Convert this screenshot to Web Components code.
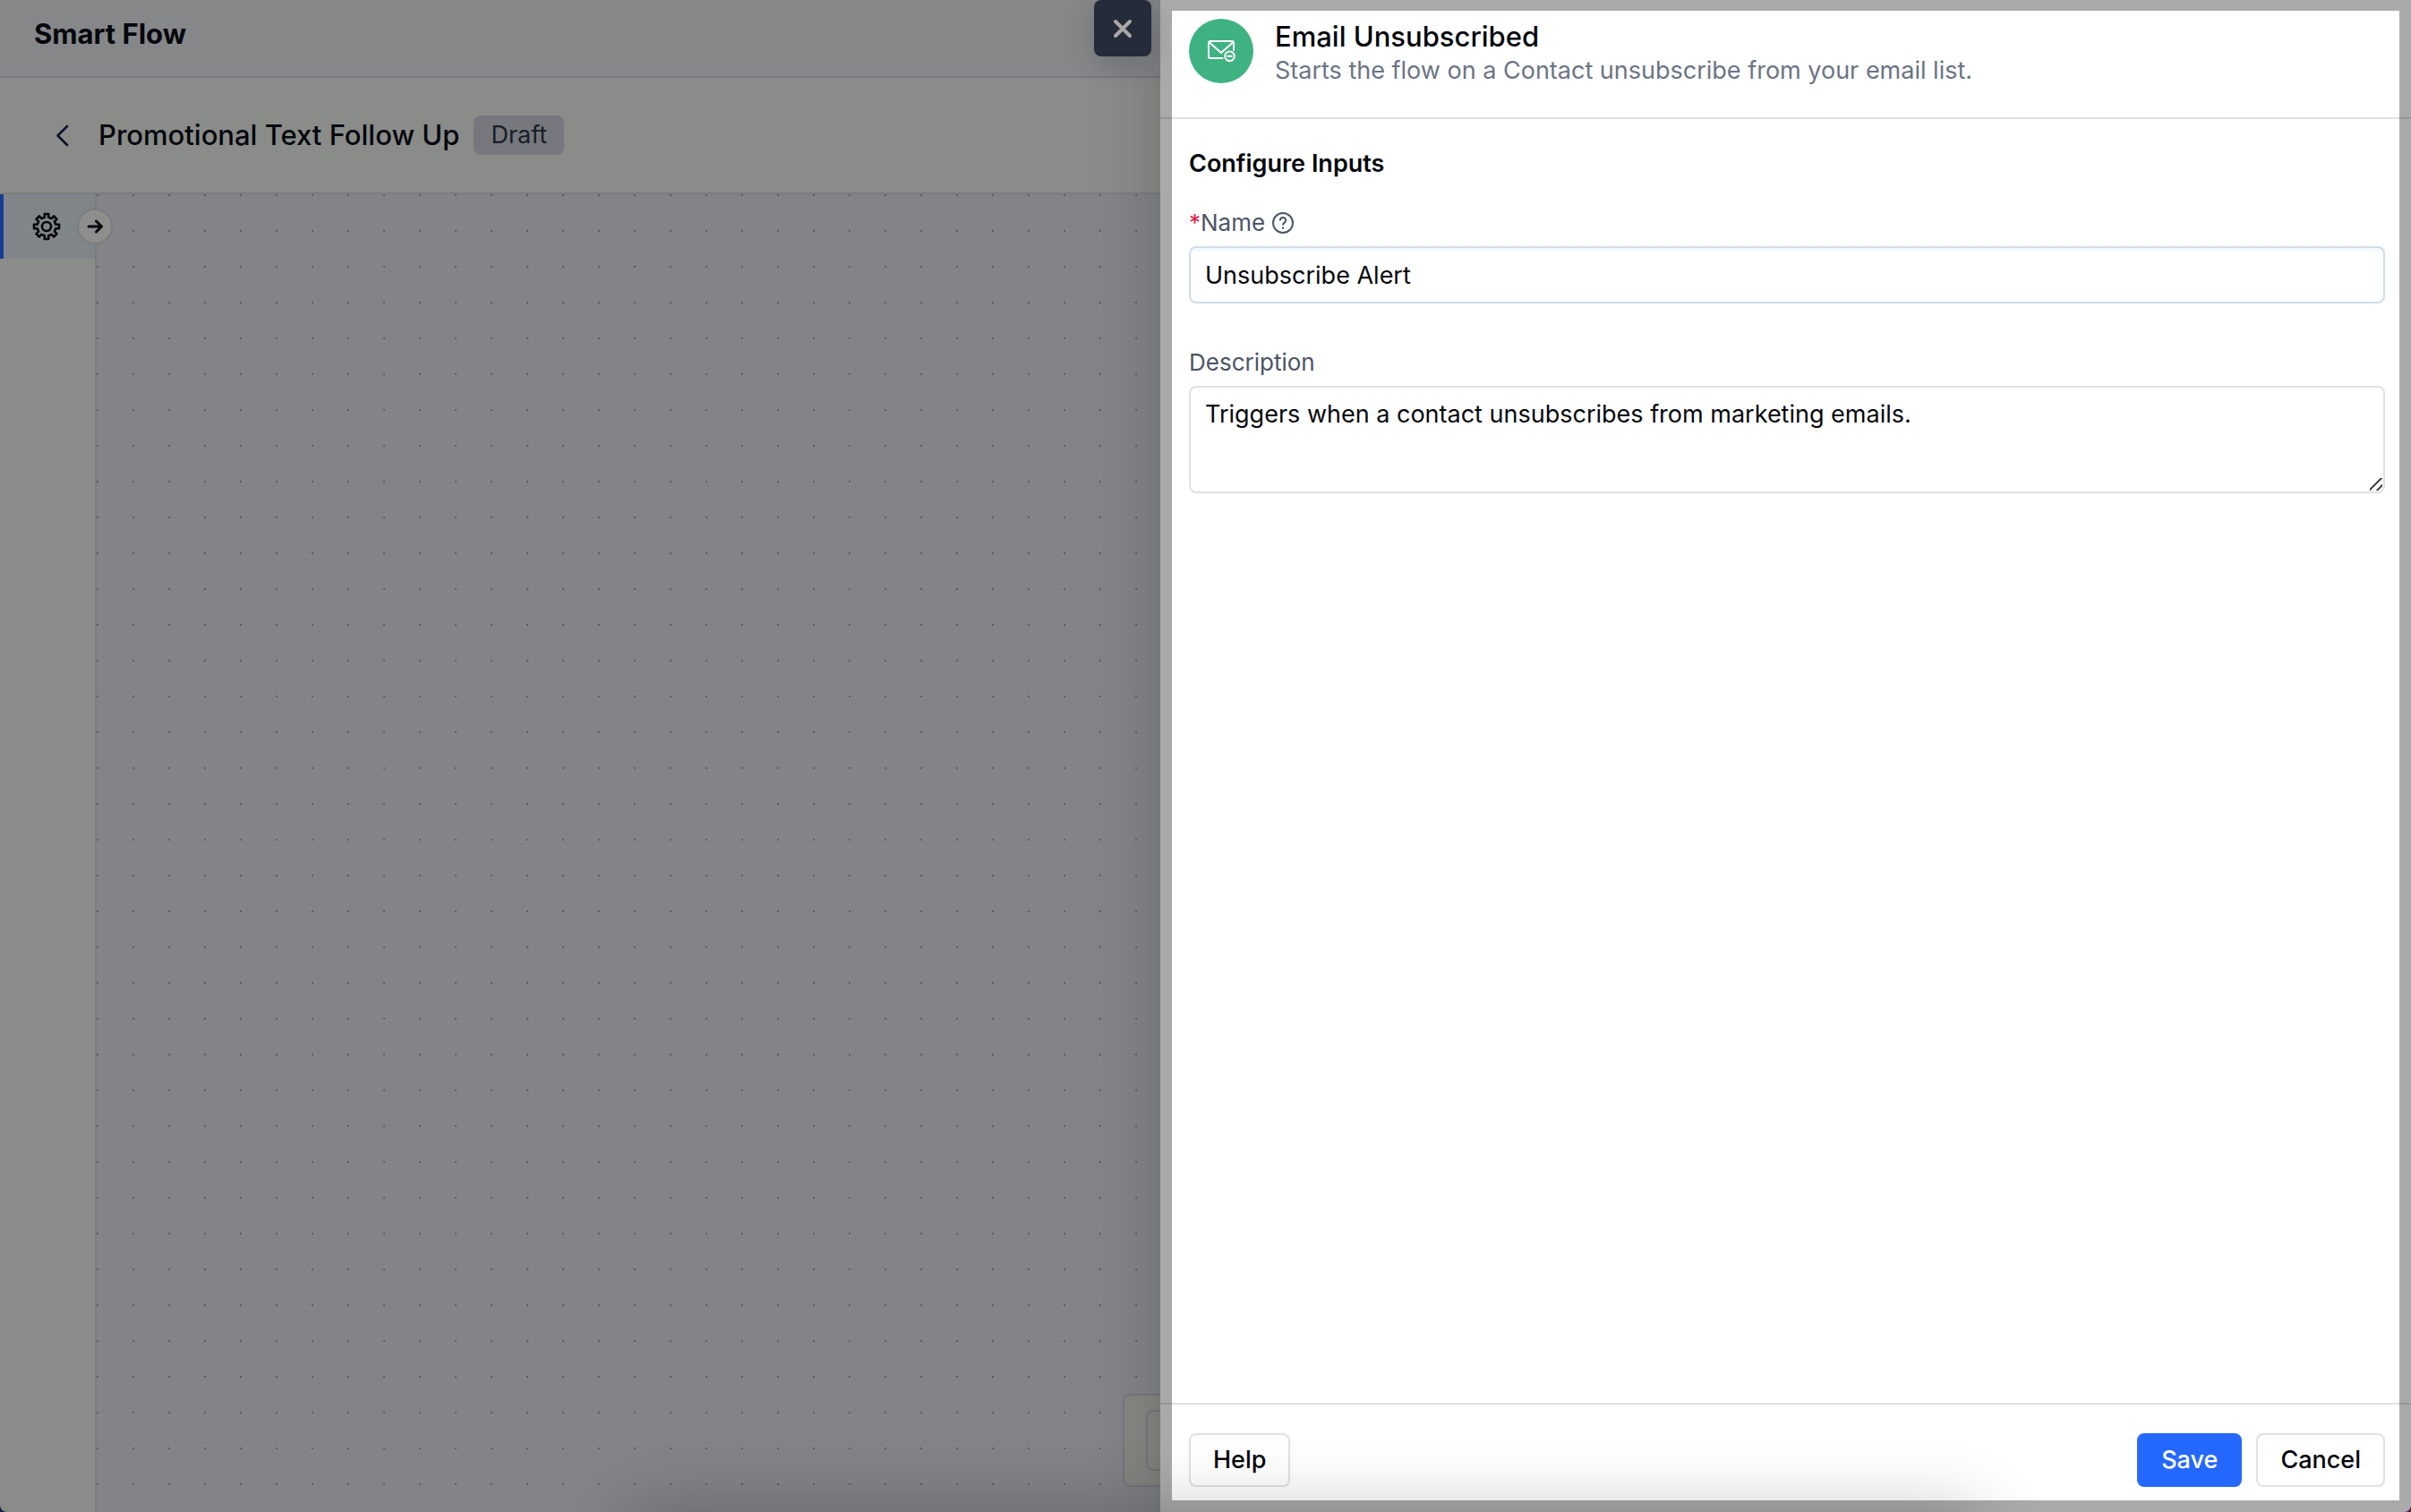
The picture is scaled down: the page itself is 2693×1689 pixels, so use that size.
<!DOCTYPE html>
<html lang="en">
<head>
<meta charset="utf-8">
<title>Smart Flow</title>
<style>
  html, body { height: 100%; }
  body {
    margin: 0;
    overflow: hidden;
    font-family: Inter, "Liberation Sans", sans-serif;
    color: #05070d;
    background: linear-gradient(90deg, #1b2244, #5a1c4a);
  }
</style>
</head>
<body>
<smart-flow-app></smart-flow-app>

<script>
class FlowHeader extends HTMLElement {
  constructor() {
    super();
    this.attachShadow({ mode: "open" });
  }

  connectedCallback() {
    this.shadowRoot.innerHTML = `
      <style>
        :host { display: block; }
        .product {
          box-sizing: border-box;
          height: 87px;
          padding: 18px 38px;
          background: #868789;
          border-bottom: 2px solid #7a7b81;
        }
        h1 { margin: 0; font-size: 31px; line-height: 40px; font-weight: 700; }
        .title-bar {
          display: flex;
          align-items: center;
          box-sizing: border-box;
          height: 130px;
          padding: 0 54px;
          background: #8a8c89;
          border-bottom: 2px solid #7b7c7e;
        }
        button { display: flex; padding: 0; border: 0; background: none; cursor: pointer; }
        h2 { margin: 0 16px 0 24px; font-size: 31px; line-height: 40px; font-weight: 500; }
        .badge {
          padding: 0 19px;
          border-radius: 8px;
          font-size: 27px;
          line-height: 44px;
          color: #171d28;
          background: #77787d;
        }
      </style>
      <div class="product"><h1>Smart Flow</h1></div>
      <div class="title-bar">
        <button type="button" aria-label="Back">
          <svg width="32" height="32" viewBox="0 0 32 32" fill="none" stroke="#0a1227" stroke-width="2.6" stroke-linecap="round" stroke-linejoin="round"><path d="M21 6 10.500 16.500 21 27"/></svg>
        </button>
        <h2><slot name="title"></slot></h2>
        <span class="badge"><slot name="status"></slot></span>
      </div>
    `;
  }
}

class FlowSidebar extends HTMLElement {
  constructor() {
    super();
    this.attachShadow({ mode: "open" });
  }

  connectedCallback() {
    this.shadowRoot.innerHTML = `
      <style>
        :host {
          display: block;
          position: relative;
          box-sizing: border-box;
          width: 108px;
          background: #8a8c89;
          border-right: 2px solid #7a7b7e;
        }
        button { border: 0; cursor: pointer; }
        .settings {
          display: flex;
          align-items: center;
          width: 100%;
          height: 72px;
          padding: 0 32px;
          border-left: 4px solid #183c91;
          background: #7f8588;
        }
        /* sits across the sidebar's edge */
        .expand {
          position: absolute;
          top: 16px;
          right: -20px;
          display: flex;
          align-items: center;
          justify-content: center;
          width: 40px;
          height: 40px;
          padding: 0;
          border: 2px solid #7b7c7e;
          border-radius: 50%;
          background: #8e8f8c;
        }
      </style>
      <button class="settings" type="button" aria-label="Settings">
        <svg width="32" height="32" viewBox="0 0 32 32" fill="none" stroke="#05070d" stroke-width="2.6" stroke-linejoin="round"><circle cx="16" cy="16" r="5"/><path d="M13.800 2h4.400v3.700l3.400 1.400 2.600-2.600 3.300 3.300-2.600 2.600 1.400 3.400H30v4.400h-3.700l-1.400 3.400 2.600 2.600-3.300 3.300-2.600-2.600-3.400 1.400V30h-4.400v-3.700l-3.400-1.400-2.600 2.600-3.300-3.300 2.600-2.600-1.400-3.400H2v-4.400h3.700l1.400-3.400-2.600-2.600 3.300-3.300 2.600 2.600 3.400-1.400z"/></svg>
      </button>
      <button class="expand" type="button" aria-label="Expand sidebar">
        <svg width="20" height="20" viewBox="0 0 20 20" fill="none" stroke="#05070d" stroke-width="3" stroke-linecap="round" stroke-linejoin="round"><path d="M3 10h14M11.500 4l6 6-6 6"/></svg>
      </button>
    `;
  }
}

class FlowCanvas extends HTMLElement {
  constructor() {
    super();
    this.attachShadow({ mode: "open" });
  }

  connectedCallback() {
    this.shadowRoot.innerHTML = `
      <style>
        :host {
          display: flex;
          flex: 1;
          align-items: flex-end;
          justify-content: flex-end;
          background: conic-gradient(from 270deg at 2px 2px, #5d5e63 25%, transparent 0) 0 0 / 40px 40px #838488;
        }
        .controls {
          box-sizing: border-box;
          width: 134px;
          height: 104px;
          margin: 28px;
          padding: 16px 24px;
          border: 2px solid #77787a;
          border-radius: 8px;
          background: #868884;
        }
        .zoom {
          box-sizing: border-box;
          height: 68px;
          border: 2px solid #77787a;
          border-radius: 8px;
        }
      </style>
      <div class="controls"><div class="zoom"></div></div>
    `;
  }
}

class ActionButton extends HTMLElement {
  constructor() {
    super();
    this.attachShadow({ mode: "open" });
  }

  connectedCallback() {
    this.shadowRoot.innerHTML = `
      <style>
        :host { display: block; }
        button {
          display: block;
          box-sizing: border-box;
          height: 60px;
          padding: 0 25px;
          border: 2px solid #e0e0e6;
          border-radius: 8px;
          font: 500 27px/56px Inter, "Liberation Sans", sans-serif;
          color: #05070d;
          background: transparent;
          cursor: pointer;
        }
        :host([primary]) button { color: #fff; border-color: #2468ff; background: #2468ff; }
      </style>
      <button type="button"><slot></slot></button>
    `;
  }
}

class TextField extends HTMLElement {
  constructor() {
    super();
    this.attachShadow({ mode: "open" });
  }

  connectedCallback() {
    const label = this.getAttribute("label");
    const value = this.getAttribute("value");
    const required = this.hasAttribute("required");
    const multiline = this.hasAttribute("multiline");

    this.shadowRoot.innerHTML = `
      <style>
        :host { display: block; }
        .caption {
          display: flex;
          align-items: center;
          gap: 8px;
          margin-bottom: 8px;
          font-size: 26px;
          line-height: 36px;
          color: #4b5565;
        }
        .required { color: #e11d48; }
        input, textarea {
          display: block;
          box-sizing: border-box;
          width: 100%;
          margin: 0;
          padding: 0 16px;
          border: 2px solid #e0e0e6;
          border-radius: 8px;
          font: 400 27px/44px Inter, "Liberation Sans", sans-serif;
          color: #05070d;
          background: #fff;
          outline: none;
        }
        input { height: 64px; border-color: #d3dde6; box-shadow: inset 0 3px 4px #f1f8fd; }
        textarea { height: 120px; padding-top: 8px; resize: vertical; }
        textarea::-webkit-resizer {
          background: linear-gradient(135deg, transparent 42%, #444 43% 51%, transparent 52% 73%, #444 74% 82%, transparent 83%) 0 0 / 14px 14px no-repeat;
        }
      </style>
      <div class="caption">
        <label for="field">${required ? '<span class="required">*</span>' : ""}${label}</label>
        ${required ? '<svg width="24" height="24" viewBox="0 0 24 24" fill="none" stroke="#4b5565" stroke-width="2"><circle cx="12" cy="12" r="11"/><path d="M8.800 9.500C8.800 5 15.200 5 15.200 9.200c0 2.800-3.200 2.600-3.200 5.300"/><path d="M12 16.500v2.200"/></svg>' : ""}
      </div>
      ${multiline ? `<textarea id="field">${value}</textarea>` : `<input id="field" type="text" value="${value}">`}
    `;
  }
}

class FlowDrawer extends HTMLElement {
  constructor() {
    super();
    this.attachShadow({ mode: "open" });
  }

  connectedCallback() {
    this.shadowRoot.innerHTML = `
      <style>
        :host {
          display: flex;
          flex-direction: column;
          position: relative;
          background: #fff;
          box-shadow: 0 0 72px rgba(0, 0, 0, 0.2);
        }
        header {
          display: flex;
          gap: 24px;
          box-sizing: border-box;
          height: 133px;
          padding: 21px 32px;
          border-bottom: 2px solid #e0e0e6;
        }
        .icon {
          display: flex;
          align-items: center;
          justify-content: center;
          width: 72px;
          height: 72px;
          border-radius: 50%;
          background: #3fb282;
        }
        h2 { margin: 0; font-size: 31px; line-height: 40px; font-weight: 500; }
        p { margin: 0; font-size: 27px; line-height: 36px; color: #6b7485; }
        main {
          display: flex;
          flex: 1;
          flex-direction: column;
          gap: 48px;
          padding: 28px 29px 28px 32px;
        }
        h3 { margin: 0 0 -22px; font-size: 27px; line-height: 44px; font-weight: 600; }
        footer {
          display: flex;
          gap: 16px;
          padding: 32px 29px 28px 32px;
          border-top: 2px solid #e0e0e6;
        }
        .spacer { flex: 1; }
        /* hangs on the outside of the drawer's left edge */
        .close {
          position: absolute;
          top: 0;
          left: -74px;
          display: flex;
          align-items: center;
          justify-content: center;
          width: 64px;
          height: 63px;
          padding: 0;
          border: 0;
          border-radius: 8px;
          background: #252b38;
          box-shadow: 0 8px 32px rgba(0, 0, 0, 0.16);
          cursor: pointer;
        }
        /* highlight frame around the drawer */
        .frame {
          position: absolute;
          inset: 0;
          border: 13px solid rgba(0, 0, 0, 0.333);
          border-top-width: 12px;
          pointer-events: none;
        }
      </style>
      <header>
        <span class="icon">
          <svg width="32" height="32" viewBox="0 0 32 32" fill="none" stroke="#fff" stroke-width="2" stroke-linejoin="round" stroke-linecap="round"><path d="M17.500 24H4a2 2 0 0 1-2-2V7a2 2 0 0 1 2-2h24a2 2 0 0 1 2 2v8M3 6.500 16 18 29 6.500"/><circle cx="25.500" cy="21.800" r="5.300"/><path d="M23.300 21.800h4.400"/></svg>
        </span>
        <div>
          <h2><slot name="title"></slot></h2>
          <p><slot name="summary"></slot></p>
        </div>
      </header>
      <main>
        <h3>Configure Inputs</h3>
        <slot></slot>
      </main>
      <footer>
        <action-button>Help</action-button>
        <span class="spacer"></span>
        <action-button primary>Save</action-button>
        <action-button>Cancel</action-button>
      </footer>
      <button class="close" type="button" aria-label="Close">
        <svg width="24" height="24" viewBox="0 0 24 24" fill="none" stroke="#a9a9a8" stroke-width="4" stroke-linecap="round"><path d="M4 4l16 16M20 4 4 20"/></svg>
      </button>
      <div class="frame"></div>
    `;
  }
}

class SmartFlowApp extends HTMLElement {
  constructor() {
    super();
    this.attachShadow({ mode: "open" });
  }

  connectedCallback() {
    this.shadowRoot.innerHTML = `
      <style>
        :host {
          display: grid;
          grid-template-columns: 1296fr 1397fr;
          position: relative;
          height: 100%;
          overflow: hidden;
          border-radius: 0 0 8px 8px;
        }
        .page { display: flex; flex-direction: column; min-width: 0; }
        .workspace { display: flex; flex: 1; }
        /* the canvas runs on under the drawer */
        flow-canvas { margin-right: -120px; }
        /* soft shade along the bottom edge */
        .shade {
          position: absolute;
          top: 100%;
          left: 26%;
          width: 56%;
          height: 80px;
          box-shadow: 0 0 80px rgba(0, 0, 0, 0.24);
          pointer-events: none;
        }
      </style>
      <div class="page">
        <flow-header>
          <span slot="title">Promotional Text Follow Up</span>
          <span slot="status">Draft</span>
        </flow-header>
        <div class="workspace">
          <flow-sidebar></flow-sidebar>
          <flow-canvas></flow-canvas>
        </div>
      </div>
      <flow-drawer>
        <span slot="title">Email Unsubscribed</span>
        <span slot="summary">Starts the flow on a Contact unsubscribe from your email list.</span>
        <text-field label="Name" value="Unsubscribe Alert" required></text-field>
        <text-field label="Description" value="Triggers when a contact unsubscribes from marketing emails." multiline></text-field>
      </flow-drawer>
      <div class="shade"></div>
    `;
  }
}

customElements.define("flow-header", FlowHeader);
customElements.define("flow-sidebar", FlowSidebar);
customElements.define("flow-canvas", FlowCanvas);
customElements.define("action-button", ActionButton);
customElements.define("text-field", TextField);
customElements.define("flow-drawer", FlowDrawer);
customElements.define("smart-flow-app", SmartFlowApp);
</script>
</body>
</html>
